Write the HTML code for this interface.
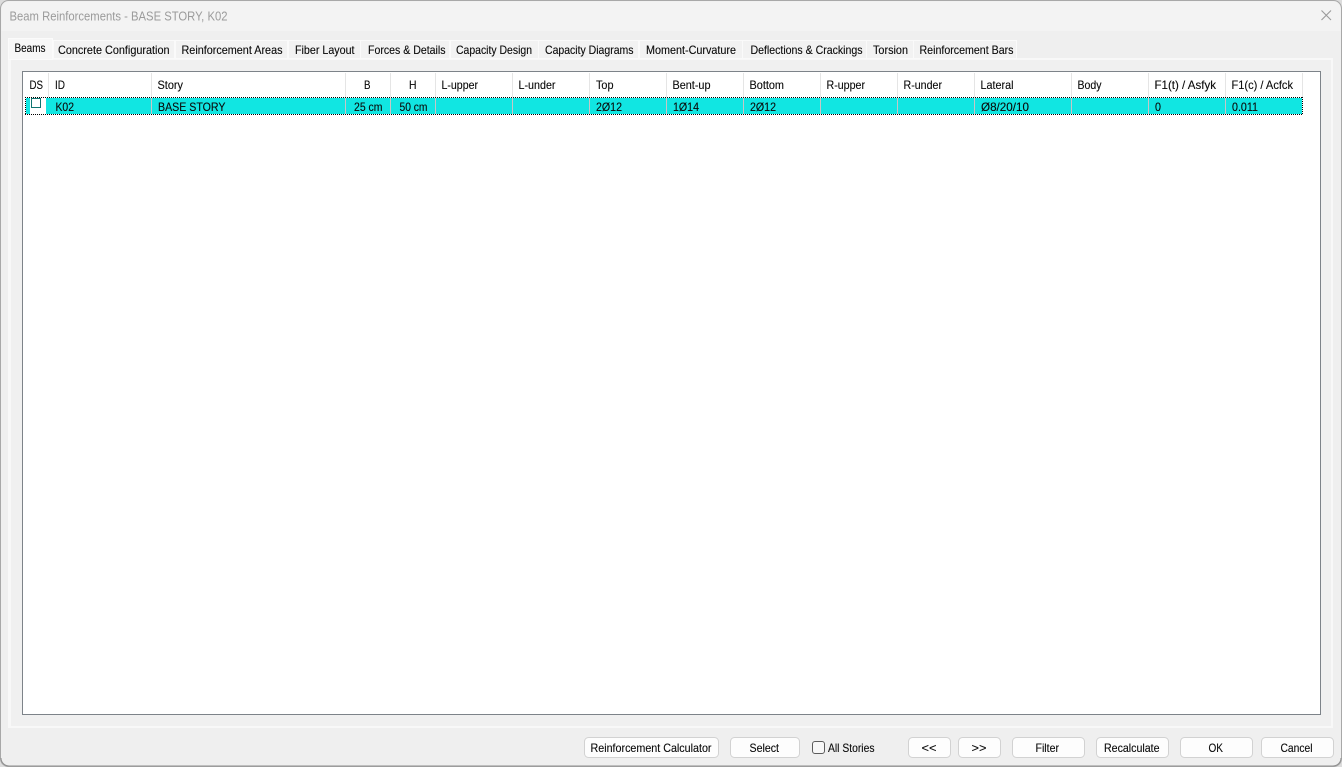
<!DOCTYPE html>
<html><head><meta charset="utf-8"><title>Beam Reinforcements</title>
<style>
html,body{margin:0;padding:0;background:#e4e4e4;overflow:hidden;width:1342px;height:767px}
svg{display:block}
text{font-family:"Liberation Sans",sans-serif;font-size:12px;fill:#0a0a0a;stroke:#0a0a0a;stroke-width:.12px}
rect,.c{shape-rendering:crispEdges}
.r{shape-rendering:auto}
</style></head><body>
<svg width="1342" height="767" viewBox="0 0 1342 767" xmlns="http://www.w3.org/2000/svg">
<rect x="0" y="0" width="1342" height="767" fill="#dcdcdc"/>
<rect class="r" x="0.5" y="0.5" width="1341" height="766" rx="8" fill="#efefef" stroke="#a8a8a8"/>
<path d="M1.500 31V9a7.500 7.500 0 0 1 7.500-7.500H1333a7.500 7.500 0 0 1 7.500 7.500V31Z" fill="#f3f3f3"/>
<path d="M1 758a8 8 0 0 0 8 8H1333a8 8 0 0 0 8-8" fill="none" stroke="#8f8f8f"/>
<text x="9.500" y="20.500" textLength="218" lengthAdjust="spacingAndGlyphs" style="font-size:12.500px;fill:#9b9b9b;stroke:none">Beam Reinforcements - BASE STORY, K02</text>
<path d="M1321.500 10.500l9.500 9.500M1331 10.500l-9.500 9.500" stroke="#9a9a9a" stroke-width="1.100" fill="none"/>

<!-- tab page -->
<rect x="8" y="58" width="1325" height="670" fill="#f8f8f8"/>
<rect x="11" y="60" width="1320" height="666" fill="#f0f0f0"/>

<!-- tabs -->
<g fill="#f2f2f2" stroke="#fafafa">
<rect x="53.500" y="40.500" width="121" height="18"/>
<rect x="175.500" y="40.500" width="112" height="18"/>
<rect x="288.500" y="40.500" width="72" height="18"/>
<rect x="360.500" y="40.500" width="89" height="18"/>
<rect x="450.500" y="40.500" width="88" height="18"/>
<rect x="538.500" y="40.500" width="100" height="18"/>
<rect x="639.500" y="40.500" width="103" height="18"/>
<rect x="742.500" y="40.500" width="124" height="18"/>
<rect x="866.500" y="40.500" width="47" height="18"/>
<rect x="913.500" y="40.500" width="103" height="18"/>
</g>
<rect x="8.500" y="38.500" width="44" height="21" fill="#f7f7f7" stroke="#fbfbfb"/>
<text x="14.500" y="52" textLength="31" lengthAdjust="spacingAndGlyphs">Beams</text>
<g>
<text x="58" y="54" textLength="111.500" lengthAdjust="spacingAndGlyphs">Concrete Configuration</text>
<text x="181.500" y="54" textLength="101" lengthAdjust="spacingAndGlyphs">Reinforcement Areas</text>
<text x="295" y="54" textLength="59.500" lengthAdjust="spacingAndGlyphs">Fiber Layout</text>
<text x="368" y="54" textLength="77.500" lengthAdjust="spacingAndGlyphs">Forces &amp; Details</text>
<text x="456" y="54" textLength="76" lengthAdjust="spacingAndGlyphs">Capacity Design</text>
<text x="545" y="54" textLength="88.500" lengthAdjust="spacingAndGlyphs">Capacity Diagrams</text>
<text x="646" y="54" textLength="90" lengthAdjust="spacingAndGlyphs">Moment-Curvature</text>
<text x="750.500" y="54" textLength="112" lengthAdjust="spacingAndGlyphs">Deflections &amp; Crackings</text>
<text x="873" y="54" textLength="35" lengthAdjust="spacingAndGlyphs">Torsion</text>
<text x="919.500" y="54" textLength="94" lengthAdjust="spacingAndGlyphs">Reinforcement Bars</text>
</g>

<!-- list -->
<rect x="22.500" y="71.500" width="1298" height="643" fill="#fff" stroke="#7d8389"/>
<path class="c" stroke="#e5e5e5" d="M48.500 73V97M151.500 73V97M345.500 73V97M390.500 73V97M435.500 73V97M512.500 73V97M589.500 73V97M666.500 73V97M743.500 73V97M820.500 73V97M897.500 73V97M974.500 73V97M1071.500 73V97M1148.500 73V97M1225.500 73V97M1302.500 73V97"/>
<text x="29.500" y="89" textLength="13.500" lengthAdjust="spacingAndGlyphs">DS</text>
<text x="55" y="89" textLength="10" lengthAdjust="spacingAndGlyphs">ID</text>
<text x="157.500" y="89" textLength="25.500" lengthAdjust="spacingAndGlyphs">Story</text>
<text x="364" y="89" textLength="6.500" lengthAdjust="spacingAndGlyphs">B</text>
<text x="409" y="89" textLength="7.500" lengthAdjust="spacingAndGlyphs">H</text>
<text x="441.500" y="89" textLength="36.500" lengthAdjust="spacingAndGlyphs">L-upper</text>
<text x="518.500" y="89" textLength="37" lengthAdjust="spacingAndGlyphs">L-under</text>
<text x="596" y="89" textLength="17.500" lengthAdjust="spacingAndGlyphs">Top</text>
<text x="672.500" y="89" textLength="38" lengthAdjust="spacingAndGlyphs">Bent-up</text>
<text x="749.500" y="89" textLength="34.500" lengthAdjust="spacingAndGlyphs">Bottom</text>
<text x="826.500" y="89" textLength="38.500" lengthAdjust="spacingAndGlyphs">R-upper</text>
<text x="903.500" y="89" textLength="38.500" lengthAdjust="spacingAndGlyphs">R-under</text>
<text x="980.500" y="89" textLength="33" lengthAdjust="spacingAndGlyphs">Lateral</text>
<text x="1077.500" y="89" textLength="24" lengthAdjust="spacingAndGlyphs">Body</text>
<text x="1154.500" y="89" textLength="61.500" lengthAdjust="spacingAndGlyphs">F1(t) / Asfyk</text>
<text x="1231.500" y="89" textLength="61.500" lengthAdjust="spacingAndGlyphs">F1(c) / Acfck</text>

<!-- row -->
<rect x="25" y="97" width="1278" height="18" fill="#fff"/>
<rect x="26" y="98" width="1276" height="16" fill="#11e6e2"/>
<rect x="30" y="98" width="16" height="16" fill="#fff"/>
<path class="c" d="M151.500 98V114M345.500 98V114M390.500 98V114M435.500 98V114M512.500 98V114M589.500 98V114M666.500 98V114M743.500 98V114M820.500 98V114M897.500 98V114M974.500 98V114M1071.500 98V114M1148.500 98V114M1225.500 98V114" stroke="#c6c6c6"/>
<path class="c" d="M25 97.500H1303M25 114.500H1303M25.500 97V115M1302.500 97V115" fill="none" stroke="#000" stroke-dasharray="1 1"/>
<rect x="31.500" y="98.500" width="9" height="9" fill="#fff" stroke="#0f7571"/>
<text x="55.500" y="111" textLength="18.500" lengthAdjust="spacingAndGlyphs">K02</text>
<text x="158" y="111" textLength="67.500" lengthAdjust="spacingAndGlyphs">BASE STORY</text>
<text x="354" y="111" textLength="28.500" lengthAdjust="spacingAndGlyphs">25 cm</text>
<text x="399.500" y="111" textLength="28" lengthAdjust="spacingAndGlyphs">50 cm</text>
<text x="596" y="111" textLength="26" lengthAdjust="spacingAndGlyphs">2Ø12</text>
<text x="673" y="111" textLength="26" lengthAdjust="spacingAndGlyphs">1Ø14</text>
<text x="750" y="111" textLength="26" lengthAdjust="spacingAndGlyphs">2Ø12</text>
<text x="981" y="111" textLength="48" lengthAdjust="spacingAndGlyphs">Ø8/20/10</text>
<text x="1155" y="111" textLength="6" lengthAdjust="spacingAndGlyphs">0</text>
<text x="1232" y="111" textLength="26" lengthAdjust="spacingAndGlyphs">0.011</text>

<!-- buttons -->
<g fill="#fdfdfd" stroke="#d2d2d2" class="btn">
<rect class="r" x="584.500" y="737.500" width="134" height="20" rx="4"/>
<rect class="r" x="730.500" y="737.500" width="69" height="20" rx="4"/>
<rect class="r" x="908.500" y="737.500" width="42" height="20" rx="4"/>
<rect class="r" x="958.500" y="737.500" width="42" height="20" rx="4"/>
<rect class="r" x="1012.500" y="737.500" width="72" height="20" rx="4"/>
<rect class="r" x="1096.500" y="737.500" width="72" height="20" rx="4"/>
<rect class="r" x="1180.500" y="737.500" width="72" height="20" rx="4"/>
<rect class="r" x="1261.500" y="737.500" width="72" height="20" rx="4"/>
</g>
<rect class="r" x="812.500" y="741.500" width="12" height="12" rx="2.500" fill="#f7f7f7" stroke="#5c5c5c"/>
<text x="590.500" y="752" textLength="121" lengthAdjust="spacingAndGlyphs">Reinforcement Calculator</text>
<text x="749.500" y="752" textLength="29.500" lengthAdjust="spacingAndGlyphs">Select</text>
<text x="828" y="752" textLength="46.500" lengthAdjust="spacingAndGlyphs">All Stories</text>
<text x="921.500" y="752" textLength="15" lengthAdjust="spacingAndGlyphs">&lt;&lt;</text>
<text x="971.500" y="752" textLength="15" lengthAdjust="spacingAndGlyphs">&gt;&gt;</text>
<text x="1035.500" y="752" textLength="23.500" lengthAdjust="spacingAndGlyphs">Filter</text>
<text x="1104" y="752" textLength="55.500" lengthAdjust="spacingAndGlyphs">Recalculate</text>
<text x="1208.500" y="752" textLength="14.500" lengthAdjust="spacingAndGlyphs">OK</text>
<text x="1280.500" y="752" textLength="32" lengthAdjust="spacingAndGlyphs">Cancel</text>
</svg>
</body></html>
